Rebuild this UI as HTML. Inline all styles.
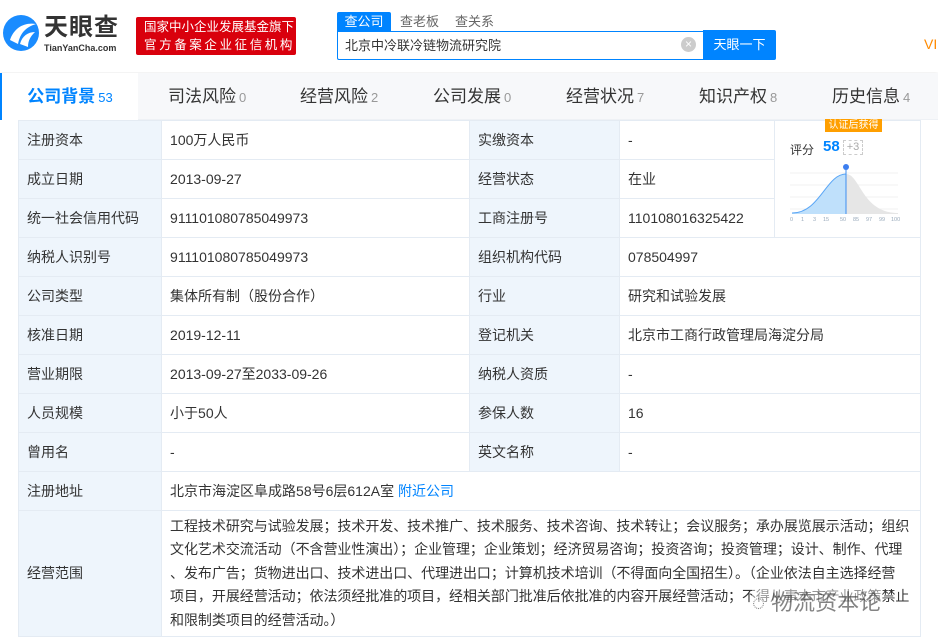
<!DOCTYPE html>
<html><head><meta charset="utf-8"><style>
*{margin:0;padding:0;box-sizing:border-box}
body{width:938px;height:640px;overflow:hidden;background:#fff;font-family:"Liberation Sans","Noto Sans CJK SC",sans-serif;color:#333;font-size:14px;position:relative}
.hdr{position:absolute;left:0;top:0;width:938px;height:72px;background:#fff;box-shadow:0 2px 4px rgba(0,0,0,.06)}
.tabs{position:absolute;top:73px;left:0;width:938px;height:47px;background:#f7f8fa;border-bottom:1px solid #eef1f5}
.tab{position:absolute;top:0;height:47px;line-height:47px;font-size:17px;color:#333}
.tab small{font-size:13px;color:#999;margin-left:3px}
.act{left:0;width:138px;background:#fff;border-left:2px solid #0084ff;color:#0084ff;text-align:center;font-weight:bold}
.act small{color:#0084ff;font-weight:normal}
table{position:absolute;left:18px;top:120px;border-collapse:collapse;width:903px}
td{border:1px solid #e4ebf3;height:39px;padding:0 8px;vertical-align:middle}
td.l{background:#eef5fc;width:144px}
td.l2{background:#eef5fc;width:150px}
.sc td{line-height:23.4px;padding:4px 0 4px 8px}
a{color:#0084ff;text-decoration:none}
</style></head><body>
<div class="hdr">
 <svg style="position:absolute;left:2px;top:14px" width="38" height="38" viewBox="0 0 38 38"><circle cx="19" cy="19" r="18" fill="#1a8cff"/><path d="M8 26 C12 14,22 8,34 10 C24 13,18 19,16 30 Z" fill="#fff"/><path d="M18 30 C20 22,26 18,33 18 C29 22,26 26,26 33 Z" fill="#fff"/></svg>
 <div style="position:absolute;left:44px;top:14px;font-size:24px;font-weight:bold;color:#333;letter-spacing:1px;line-height:28px">天眼查</div>
 <div style="position:absolute;left:44px;top:43px;font-size:9px;font-weight:bold;color:#333">TianYanCha.com</div>
 <div style="position:absolute;left:136px;top:17px;width:160px;height:38px;background:#d9000d;border-radius:2px;color:#fff;font-size:12.5px;line-height:18px;padding:1px 0 0 8px;white-space:nowrap">国家中小企业发展基金旗下<br><span style="letter-spacing:2.6px">官方备案企业征信机构</span></div>
 <div style="position:absolute;left:337px;top:12px;width:54px;height:19px;background:#0084ff;color:#fff;font-size:13px;line-height:19px;text-align:center;border-radius:2px 2px 0 0">查公司</div>
 <div style="position:absolute;left:400px;top:12px;font-size:13px;color:#666;line-height:19px">查老板</div>
 <div style="position:absolute;left:455px;top:12px;font-size:13px;color:#666;line-height:19px">查关系</div>
 <div style="position:absolute;left:337px;top:31px;width:370px;height:29px;border:1px solid #0084ff;border-right:none;font-size:13px;line-height:27px;padding-left:7px;border-radius:0 0 0 2px">北京中冷联冷链物流研究院</div>
 <div style="position:absolute;left:681px;top:37px;width:15px;height:15px;border-radius:50%;background:#ccc;color:#fff;font-size:12px;line-height:15px;text-align:center">×</div>
 <div style="position:absolute;left:703px;top:30px;width:73px;height:30px;background:#0084ff;color:#fff;font-size:13px;line-height:30px;text-align:center;border-radius:0 2px 2px 0">天眼一下</div>
 <div style="position:absolute;left:924px;top:36px;color:#ff8a00;font-size:14px">VI</div>
</div>
<div class="tabs">
 <div class="tab act">公司背景<small>53</small></div>
 <div class="tab" style="left:168px">司法风险<small>0</small></div>
 <div class="tab" style="left:300px">经营风险<small>2</small></div>
 <div class="tab" style="left:433px">公司发展<small>0</small></div>
 <div class="tab" style="left:566px">经营状况<small>7</small></div>
 <div class="tab" style="left:699px">知识产权<small>8</small></div>
 <div class="tab" style="left:832px">历史信息<small>4</small></div>
</div>
<table>
<tr><td class="l">注册资本</td><td style="width:308px">100万人民币</td><td class="l2">实缴资本</td><td style="width:155px">-</td><td rowspan="3" style="width:146px;padding:0;position:relative">
 <div style="position:absolute;left:50px;top:-2px;width:57px;height:13px;background:#ff9f00;color:#fff;font-size:10px;line-height:13px;text-align:center">认证后获得</div>
 <div style="position:absolute;left:15px;top:20px;font-size:12px;color:#333">评分</div>
 <div style="position:absolute;left:48px;top:17px;font-size:15px;font-weight:bold;color:#0084ff">58</div>
 <div style="position:absolute;left:68px;top:19px;width:20px;height:15px;border:1px dashed #ccc;font-size:11px;color:#aaa;text-align:center;line-height:13px">+3</div>
 <svg style="position:absolute;left:15px;top:40px" width="110" height="62" viewBox="0 0 110 62"><g stroke="#f0f0f0"><line x1="0" y1="12" x2="108" y2="12"/><line x1="0" y1="24" x2="108" y2="24"/><line x1="0" y1="36" x2="108" y2="36"/><line x1="0" y1="48" x2="108" y2="48"/></g><path d="M56 13 C70 13,72 52,108 52 L108 53 L56 53Z" fill="#e6e6e6"/><path d="M2 52 C30 52,36 13,56 13 L56 53 L2 53Z" fill="#bfe0fb"/><path d="M2 52 C30 52,36 13,56 13" stroke="#5aa6f6" fill="none"/><line x1="56" y1="8" x2="56" y2="53" stroke="#3d8ef0"/><circle cx="56" cy="6" r="3" fill="#3d7ff0"/><text y="60" font-size="5.5" fill="#9ab"><tspan x="0">0</tspan><tspan x="11">1</tspan><tspan x="23">3</tspan><tspan x="33">15</tspan><tspan x="50">50</tspan><tspan x="63">85</tspan><tspan x="76">97</tspan><tspan x="89">99</tspan><tspan x="101">100</tspan></text></svg>
</td></tr>
<tr><td class="l">成立日期</td><td>2013-09-27</td><td class="l2">经营状态</td><td>在业</td></tr>
<tr><td class="l">统一社会信用代码</td><td>911101080785049973</td><td class="l2">工商注册号</td><td>110108016325422</td></tr>
<tr><td class="l">纳税人识别号</td><td>911101080785049973</td><td class="l2">组织机构代码</td><td colspan="2">078504997</td></tr>
<tr><td class="l">公司类型</td><td>集体所有制（股份合作）</td><td class="l2">行业</td><td colspan="2">研究和试验发展</td></tr>
<tr><td class="l">核准日期</td><td>2019-12-11</td><td class="l2">登记机关</td><td colspan="2">北京市工商行政管理局海淀分局</td></tr>
<tr><td class="l">营业期限</td><td>2013-09-27至2033-09-26</td><td class="l2">纳税人资质</td><td colspan="2">-</td></tr>
<tr><td class="l">人员规模</td><td>小于50人</td><td class="l2">参保人数</td><td colspan="2">16</td></tr>
<tr><td class="l">曾用名</td><td>-</td><td class="l2">英文名称</td><td colspan="2">-</td></tr>
<tr><td class="l">注册地址</td><td colspan="4">北京市海淀区阜成路58号6层612A室 <a>附近公司</a></td></tr>
<tr class="sc"><td class="l" style="height:126px;padding:0 8px">经营范围</td><td colspan="4"><div style="width:745px;letter-spacing:-0.05px">工程技术研究与试验发展；技术开发、技术推广、技术服务、技术咨询、技术转让；会议服务；承办展览展示活动；组织<br>文化艺术交流活动（不含营业性演出）；企业管理；企业策划；经济贸易咨询；投资咨询；投资管理；设计、制作、代理<br>、发布广告；货物进出口、技术进出口、代理进出口；计算机技术培训（不得面向全国招生）。（企业依法自主选择经营<br>项目，开展经营活动；依法须经批准的项目，经相关部门批准后依批准的内容开展经营活动；不得从事本市产业政策禁止<br>和限制类项目的经营活动。）</div></td></tr>
</table>
<div style="position:absolute;left:752px;top:585px;font-size:22px;color:#666;opacity:.8;background:rgba(255,255,255,.6)">◌ 物流资本论</div>
</body></html>
